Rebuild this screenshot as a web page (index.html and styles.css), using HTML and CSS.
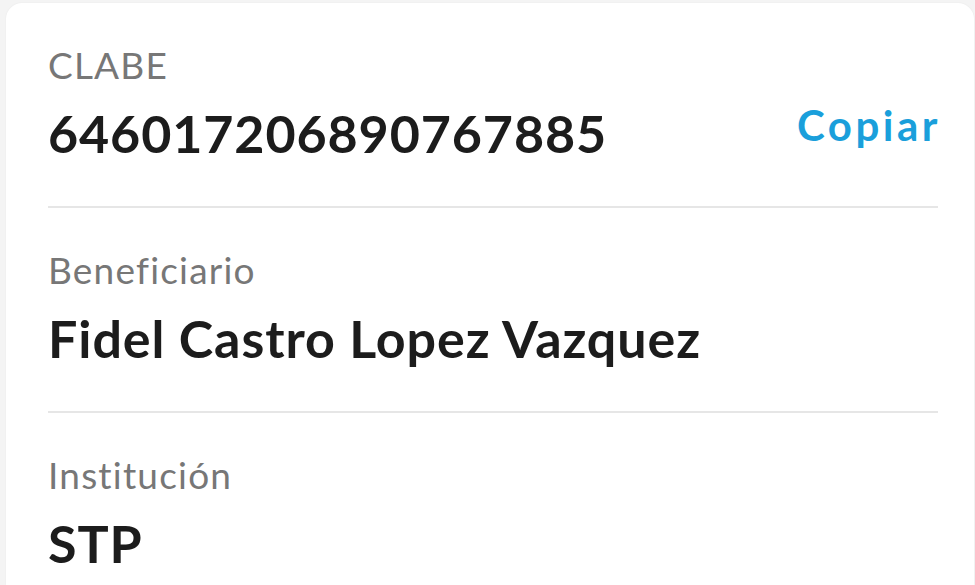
FILE: index.html
```html
<!DOCTYPE html>
<html lang="es">
<head>
  <meta charset="UTF-8">
  <meta name="viewport" content="width=device-width, initial-scale=1.0">
  <title>Datos de transferencia</title>
  <link rel="stylesheet" href="styles.css">
</head>
<body>
  <div class="card">
    <div class="row">
      <div class="label">CLABE</div>
      <div class="value-line">
        <div class="value">646017206890767885</div>
        <button class="copy">Copiar</button>
      </div>
    </div>

    <div class="row">
      <div class="label">Beneficiario</div>
      <div class="value">Fidel Castro Lopez Vazquez</div>
    </div>

    <div class="row">
      <div class="label">Institución</div>
      <div class="value">STP</div>
    </div>
  </div>
</body>
</html>
```

FILE: styles.css
```css
:root {
  --bg: #f4f4f4;
  --card: #fff;
  --label: #777;
  --text: #1c1c1c;
  --line: #e6e6e6;
  --primary: #1a9fdb;
}

* {
  box-sizing: border-box;
}

body {
  font-family: 'Lato', sans-serif;
  margin: 0;
  padding: 3px 1px 0 6px;
  background: var(--bg);
  color: var(--text);
  height: 585px;
  overflow: hidden;
  display: flex;
  flex-direction: column;
}

.card {
  flex: 1;
  background: var(--card);
  border-radius: 16px 16px 0 0;
  padding: 0 36px 0 42px;
  box-shadow: 0 0 2px rgba(0, 0, 0, 0.06);
  overflow: hidden;
}

.row {
  padding: 40px 0 43px;
  border-bottom: 2px solid var(--line);
}

.row:last-child {
  border-bottom: none;
  padding-bottom: 0;
}

.label {
  font-size: 37px;
  line-height: 44px;
  letter-spacing: 1.2px;
  color: var(--label);
  margin-bottom: 16px;
}

.value-line {
  display: flex;
  justify-content: space-between;
  align-items: flex-start;
}

.value {
  font-size: 52px;
  line-height: 60px;
  font-weight: 700;
  letter-spacing: 0.9px;
}

.copy {
  font-family: inherit;
  font-size: 42px;
  line-height: 44px;
  font-weight: 700;
  letter-spacing: 3.5px;
  color: var(--primary);
  background: none;
  border: none;
  padding: 0;
  margin-right: -3px;
  cursor: pointer;
}
```
